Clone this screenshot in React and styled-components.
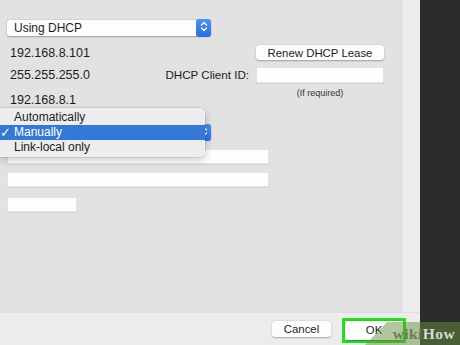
import React from 'react';
import styled, { createGlobalStyle } from 'styled-components';

const GlobalStyle = createGlobalStyle`
	html, body {
		margin: 0;
		padding: 0;
		background: #2b2b2b;
	}
	body {
		font-family: "Liberation Sans", Arial, sans-serif;
		color: #1c1c1c;
	}
`;

const Chevrons = () => (
	<svg width="8" height="11" viewBox="0 0 8 11" fill="none">
		<path d="M1.5 4L4 1.5L6.5 4" stroke="#fff" strokeWidth="1.3" strokeLinecap="round" strokeLinejoin="round" />
		<path d="M1.5 7L4 9.5L6.5 7" stroke="#fff" strokeWidth="1.3" strokeLinecap="round" strokeLinejoin="round" />
	</svg>
);

export default function App() {
	return (
		<Screen>
			<GlobalStyle />
			<Window>
				<Body>
					<Panel>
						<Row $h={16}>
							<Select $w={204}>
								<span>Using DHCP</span>
								<SelectButton><Chevrons /></SelectButton>
							</Select>
						</Row>
						<Row $top={9} $h={15}>
							<LeftCell>
								<Value>192.168.8.101</Value>
							</LeftCell>
							<Button $w={128}>Renew DHCP Lease</Button>
						</Row>
						<Row $top={7} $h={16}>
							<LeftCell>
								<Value>255.255.255.0</Value>
								<Label>DHCP Client ID:</Label>
							</LeftCell>
							<Field $w={128} />
						</Row>
						<Row $top={4} $h={20} $align="flex-start">
							<LeftCell>
								<Value $offset={6}>192.168.8.1</Value>
							</LeftCell>
							<Note>(If required)</Note>
						</Row>
						<Row $top={18} $h={15}>
							<Select $w={204}>
								<span>Manually</span>
								<SelectButton><Chevrons /></SelectButton>
							</Select>
						</Row>
						<Row $top={9} $h={15}>
							<Field $w={262} />
						</Row>
						<Row $top={8} $h={15}>
							<Field $w={262} />
						</Row>
						<Row $top={10} $h={15}>
							<Field $w={70} />
						</Row>

						<Menu>
							<MenuItem>Automatically</MenuItem>
							<MenuItem $active>
								<Check>✓</Check>
								Manually
							</MenuItem>
							<MenuItem>Link-local only</MenuItem>
						</Menu>
					</Panel>
					<Strip />
				</Body>
				<Footer>
					<Button $w={59} $h={16}>Cancel</Button>
					<OkFrame>
						<Button $w={58} $h={19}>OK</Button>
					</OkFrame>
				</Footer>
			</Window>
			<DarkSide />
			<Watermark>
				<WikiText>
					<Wiki>wiki</Wiki>How
				</WikiText>
			</Watermark>
		</Screen>
	);
}

const Screen = styled.div`
	position: relative;
	display: flex;
	width: 460px;
	height: 345px;
	overflow: hidden;
`;

const Window = styled.div`
	width: 420px;
	display: flex;
	flex-direction: column;
`;

const Body = styled.div`
	display: flex;
	height: 312px;
`;

const Panel = styled.div`
	position: relative;
	width: 394px;
	padding: 20px 0 0 7px;
	background: #e2e2e2;
`;

const Strip = styled.div`
	flex: 1;
	background: #ececec;
	border-left: 1px solid #d9d9d9;
`;

const DarkSide = styled.div`
	flex: 1;
	background: #2b2b2b;
`;

const Row = styled.div`
	display: flex;
	align-items: ${(p) => p.$align || 'center'};
	height: ${(p) => p.$h}px;
	margin-top: ${(p) => p.$top || 0}px;
`;

const LeftCell = styled.div`
	width: 249px;
	height: 100%;
	display: flex;
	align-items: center;
	justify-content: space-between;
	padding-right: 7px;
	box-sizing: border-box;
`;

const Value = styled.div`
	font-size: 12.5px;
	line-height: 14px;
	padding-left: 3px;
	margin-top: ${(p) => p.$offset || 0}px;
	align-self: ${(p) => (p.$offset ? 'flex-start' : 'center')};
`;

const Label = styled.div`
	font-size: 11.6px;
	line-height: 14px;
`;

const Note = styled.div`
	width: 128px;
	text-align: center;
	font-size: 9px;
	line-height: 10px;
	margin-top: 1px;
	color: #333;
`;

const Select = styled.div`
	position: relative;
	width: ${(p) => p.$w}px;
	height: 100%;
	display: flex;
	align-items: center;
	justify-content: space-between;
	box-sizing: border-box;
	padding-left: 7px;
	background: #fdfdfd;
	border-radius: 3px;
	box-shadow: 0 0.5px 1.5px rgba(0, 0, 0, 0.3);
	font-size: 12px;
`;

const SelectButton = styled.div`
	width: 15px;
	height: 100%;
	margin-top: -1px;
	padding-bottom: 2px;
	display: flex;
	align-items: center;
	justify-content: center;
	border-radius: 3px;
	background: linear-gradient(#4b92f5, #2a6fe0);
`;

const Button = styled.div`
	width: ${(p) => p.$w}px;
	height: ${(p) => (p.$h ? `${p.$h}px` : '100%')};
	display: flex;
	align-items: center;
	justify-content: center;
	background: #fdfdfd;
	border-radius: 3px;
	box-shadow: 0 0.5px 1.5px rgba(0, 0, 0, 0.3);
	font-size: 11.4px;
`;

const Field = styled.div`
	width: ${(p) => p.$w}px;
	height: 100%;
	background: #fefefe;
	box-shadow: inset 0 0 0 0.5px #cacaca, 0 0.5px 0 #c8c8c8;
`;

const Menu = styled.div`
	position: absolute;
	left: 0;
	top: 108px;
	width: 205px;
	padding: 2px 0;
	background: rgba(237, 237, 237, 0.98);
	border-radius: 0 5px 5px 0;
	box-shadow: 0 3px 9px rgba(0, 0, 0, 0.22), 0 0 0 0.5px rgba(0, 0, 0, 0.12);
`;

const MenuItem = styled.div`
	position: relative;
	height: 15px;
	line-height: 15px;
	padding-left: 14px;
	font-size: 12px;
	color: ${(p) => (p.$active ? '#fff' : '#1c1c1c')};
	background: ${(p) => (p.$active ? '#3478d8' : 'transparent')};
`;

const Check = styled.span`
	position: absolute;
	left: 0;
	top: 0;
	font-size: 13px;
	font-family: "DejaVu Sans", sans-serif;
`;

const Footer = styled.div`
	flex: 1;
	display: flex;
	align-items: center;
	justify-content: flex-end;
	gap: 11px;
	padding-right: 14px;
	background: #ececec;
	border-top: 1px solid #dedede;
`;

const OkFrame = styled.div`
	border: 3.5px solid #22e31a;
	display: flex;
	margin-top: 2px;
`;

const Watermark = styled.div`
	position: absolute;
	right: 0;
	bottom: 0;
	width: 95px;
	height: 23px;
	background: rgba(105, 145, 65, 0.5);
	clip-path: polygon(22px 0, 100% 0, 100% 100%, 0 100%);
	display: flex;
	align-items: center;
	justify-content: flex-end;
	padding-right: 5px;
	box-sizing: border-box;
`;

const WikiText = styled.div`
	font-family: "Liberation Serif", "DejaVu Serif", serif;
	font-weight: bold;
	font-size: 15.5px;
	line-height: 17px;
	color: rgba(240, 240, 235, 0.85);
	letter-spacing: 0.4px;
`;

const Wiki = styled.span`
	color: rgba(95, 120, 70, 0.9);
`;
